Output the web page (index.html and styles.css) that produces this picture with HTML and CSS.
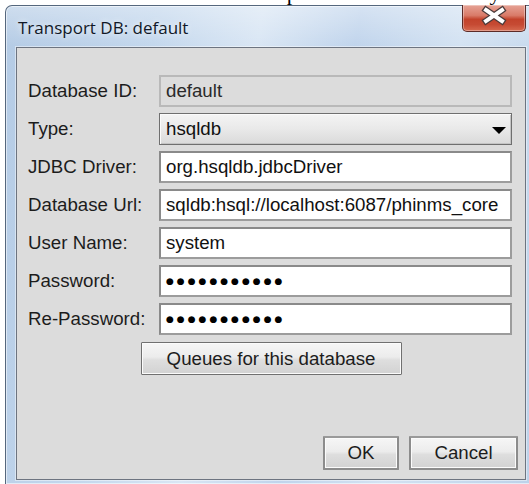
FILE: index.html
```html
<!DOCTYPE html>
<html lang="en">
<head>
<meta charset="utf-8">
<title>Transport DB: default</title>
<link rel="stylesheet" href="styles.css">
</head>
<body>
<div class="backdrop"><p class="doc-line">select the db and click Open database directly</p></div>

<div class="window">
  <div class="titlebar">
    <span class="title">Transport DB: default</span>
    <button class="close" type="button" aria-label="Close">
      <svg width="62" height="26" viewBox="0 0 62 26">
        <path d="M23 5 L39 16 M39 5 L23 16" stroke="#4a3a3a" stroke-width="6.5" stroke-linecap="square" fill="none"/>
        <path d="M23 5 L39 16 M39 5 L23 16" stroke="#ffffff" stroke-width="4" stroke-linecap="square" fill="none"/>
      </svg>
    </button>
  </div>

  <div class="client">
    <div class="form">
      <span class="label">Database ID:</span>
      <div class="field disabled">default</div>

      <span class="label">Type:</span>
      <div class="field combo"><span>hsqldb</span><i class="arrow"></i></div>

      <span class="label">JDBC Driver:</span>
      <div class="field">org.hsqldb.jdbcDriver</div>

      <span class="label">Database Url:</span>
      <div class="field">sqldb:hsql://localhost:6087/phinms_core</div>

      <span class="label">User Name:</span>
      <div class="field">system</div>

      <span class="label">Password:</span>
      <div class="field"><span class="dots">●●●●●●●●●●●</span></div>

      <span class="label">Re-Password:</span>
      <div class="field"><span class="dots">●●●●●●●●●●●</span></div>
    </div>

    <div class="queues-row">
      <button class="btn queues" type="button">Queues for this database</button>
    </div>

    <div class="actions">
      <button class="btn ok" type="button">OK</button>
      <button class="btn cancel" type="button">Cancel</button>
    </div>
  </div>
</div>
</body>
</html>
```

FILE: styles.css
```css
html, body {
  margin: 0;
  padding: 0;
}

body {
  width: 529px;
  height: 484px;
  overflow: hidden;
  background: #ffffff;
}

/* strip of the document lying behind the dialog */
.backdrop {
  height: 5px;
  overflow: hidden;
}

.doc-line {
  margin: -19px 0 0 0;
  font: 22px/24px "Liberation Serif", serif;
  color: #000;
  white-space: nowrap;
  word-spacing: 14px;
}

/* Aero style window frame */
.window {
  box-sizing: border-box;
  margin-left: 5px;
  width: 532px;
  height: 479px;
  padding: 0 10px 4px 10px;
  border: 1px solid #55677d;
  border-bottom: none;
  border-radius: 7px 7px 0 0;
  display: flex;
  flex-direction: column;
  background:
    linear-gradient(180deg, rgba(255,255,255,0.35) 0px, rgba(255,255,255,0) 40px),
    linear-gradient(100deg, #b4cbe5 0%, #c3d7ed 25%, #d9e6f4 42%, #c0d4ec 58%, #d3e2f2 75%, #bcd1e9 100%);
  box-shadow: inset 0 0 0 1px rgba(255,255,255,0.55);
}

.titlebar {
  height: 41px;
  flex: none;
  display: flex;
  align-items: flex-start;
  padding-left: 2px;
}

.title {
  align-self: center;
  font: 17px "Open Sans", sans-serif;
  color: #111827;
  text-shadow: 0 0 6px rgba(255,255,255,0.9);
  margin-top: 1px;
}

.close {
  flex: none;
  width: 64px;
  height: 27px;
  margin: -1px 0 0 auto;
  margin-right: 0;
  padding: 0;
  border: 1px solid #5c2b27;
  border-top: none;
  border-radius: 0 0 5px 5px;
  background: linear-gradient(180deg, #e6a396 0%, #d97b69 40%, #c3432c 55%, #c64a33 75%, #d66a50 100%);
  box-shadow: inset 0 0 0 1px rgba(255,255,255,0.35);
}

.close svg {
  display: block;
}

/* dialog content area */
.client {
  flex: 1;
  display: flex;
  flex-direction: column;
  padding: 27px 0 9px 0;
  border: 1px solid #6d7480;
  background: #dcdcdc;
  box-shadow: 0 0 0 1px rgba(255,255,255,0.45);
  font: 18.7px "Liberation Sans", Arial, sans-serif;
  color: #1c1c1c;
}

.form {
  margin: 0 11px;
  display: grid;
  grid-template-columns: 131px 353px;
  grid-auto-rows: 32px;
  row-gap: 6px;
}

.label {
  display: flex;
  align-items: center;
}

.field {
  box-sizing: border-box;
  display: flex;
  align-items: center;
  padding: 0 5px;
  border: 2px solid #9c9c9c;
  border-top-color: #8a8a8a;
  border-left-color: #8a8a8a;
  background: #ffffff;
  color: #111;
  white-space: nowrap;
  overflow: hidden;
}

.field.disabled {
  background: #dcdcdc;
  border-color: #b9b9b9;
  color: #2a2a2a;
}

.field.combo {
  justify-content: space-between;
  border: 1px solid #6f6f6f;
  padding: 0 5px 0 6px;
  background: linear-gradient(180deg, #f4f4f4 0%, #e9e9e9 50%, #dadada 100%);
  box-shadow: inset 1px 1px 0 #fbfbfb, inset -1px -1px 0 #c4c4c4;
}

.arrow {
  width: 0;
  height: 0;
  border-left: 7px solid transparent;
  border-right: 7px solid transparent;
  border-top: 7px solid #000;
  margin-top: 2px;
}

.dots {
  font: 9px "DejaVu Sans", sans-serif;
  letter-spacing: 3px;
  color: #000;
}

/* buttons */
.btn {
  box-sizing: border-box;
  font: 18.7px "Liberation Sans", Arial, sans-serif;
  color: #1c1c1c;
  border: 1px solid #707070;
  border-radius: 1px;
  background: linear-gradient(180deg, #f6f6f6 0%, #ececec 45%, #dedede 55%, #d2d2d2 100%);
  box-shadow: inset 0 0 0 1px #fbfbfb;
  padding: 0;
}

.queues-row {
  margin-top: 7px;
  display: flex;
  justify-content: center;
}

.queues {
  width: 261px;
  height: 33px;
}

.actions {
  margin-top: auto;
  display: flex;
  justify-content: flex-end;
  gap: 10px;
  padding-right: 7px;
}

.actions .btn {
  height: 34px;
  border: 2px solid #8c8c8c;
  border-top-color: #9a9a9a;
}

.ok {
  width: 76px;
}

.cancel {
  width: 109px;
}
```
